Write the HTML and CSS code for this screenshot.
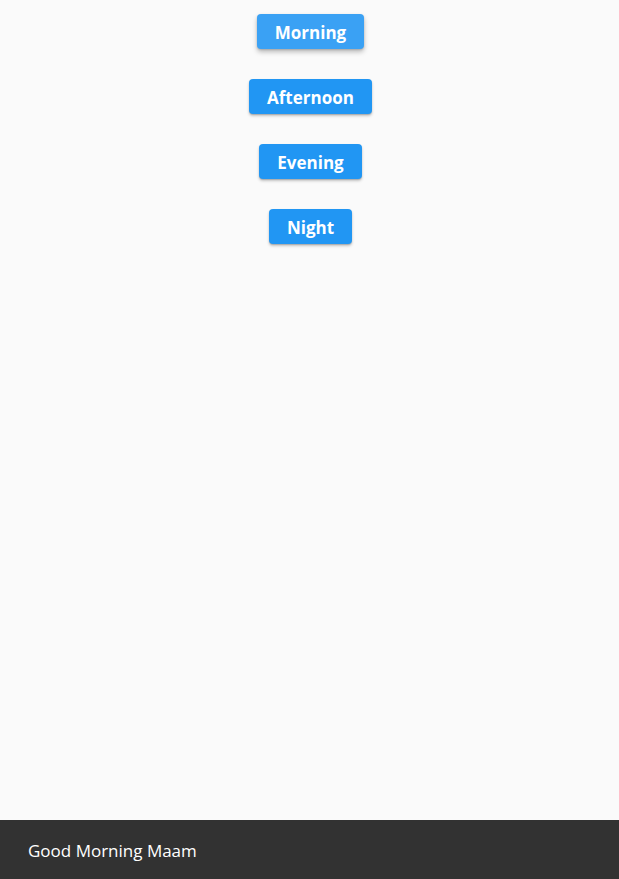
FILE: index.html
```html
<!DOCTYPE html>
<html>
<head>
<meta charset="utf-8">
<link rel="stylesheet" href="styles.css">
</head>
<body>
<div class="app">
  <main class="buttons">
    <button class="btn btn-hover">Morning</button>
    <button class="btn">Afternoon</button>
    <button class="btn">Evening</button>
    <button class="btn">Night</button>
  </main>
  <div class="snackbar">Good Morning Maam</div>
</div>
</body>
</html>
```
FILE: styles.css
```css
html, body {
  margin: 0;
  padding: 0;
  height: 100%;
}
body {
  background: #fafafa;
  font-family: "Open Sans", "Noto Sans", sans-serif;
}
.app {
  height: 879px;
  display: flex;
  flex-direction: column;
  overflow: hidden;
}
.buttons {
  flex: 1;
  display: flex;
  flex-direction: column;
  align-items: center;
  gap: 30px;
  padding-top: 14px;
  padding-left: 2px;
}
.btn {
  height: 35px;
  padding: 2px 18px 0;
  border: none;
  border-radius: 4px;
  background: #2196f3;
  color: #fff;
  font-family: "Open Sans", "Noto Sans", sans-serif;
  font-weight: 700;
  font-size: 17px;
  box-shadow: 0 2px 3px rgba(0,0,0,0.22), 0 1px 1px rgba(0,0,0,0.14);
}
.btn-hover {
  background: #3aa1f4;
  box-shadow: 0 3px 5px rgba(0,0,0,0.25), 0 1px 2px rgba(0,0,0,0.14);
}
.snackbar {
  height: 59px;
  background: #323232;
  color: #fff;
  font-size: 17px;
  padding-left: 28px;
  padding-top: 2px;
  display: flex;
  align-items: center;
  box-sizing: border-box;
}
```
